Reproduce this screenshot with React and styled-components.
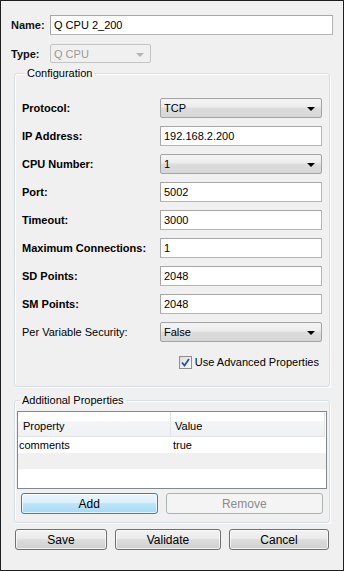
import { Fragment } from 'react'
import styled, { createGlobalStyle } from 'styled-components'

const Global = createGlobalStyle`
  html, body { margin: 0; padding: 0; background: #f0f0f0; }
  body { font-family: 'Liberation Sans', Arial, sans-serif; font-size: 11px; color: #000; }
  * { box-sizing: border-box; }
`

const Window = styled.div`
  width: 344px;
  height: 571px;
  border: 1px solid #1e1e1e;
  background: #f0f0f0;
  padding: 14px 10px 0 10px;
  display: flex;
  flex-direction: column;
`

const TopRow = styled.div`
  display: flex;
  align-items: center;
  height: ${(p) => p.h || 20}px;
  margin-bottom: ${(p) => p.mb || 0}px;
`

const TopLabel = styled.div`
  width: 39px;
  font-weight: 700;
  color: #111;
`

const Input = styled.div`
  height: 20px;
  width: ${(p) => p.w || 162}px;
  background: #fff;
  border: 1px solid;
  border-color: #a7a7a7 #b5b5b5 #b5b5b5 #a7a7a7;
  padding: 0 3px;
  display: flex;
  align-items: center;
  white-space: nowrap;
`

const Select = styled.div`
  height: ${(p) => p.h || 20}px;
  width: ${(p) => p.w || 162}px;
  border: 1px solid ${(p) => (p.disabled ? '#c4c4c4' : '#a3a3a3')};
  border-radius: 2px;
  background: ${(p) =>
    p.disabled
      ? '#f0f0f0'
      : 'linear-gradient(#f5f5f5 0%, #ececec 45%, #dddddd 50%, #d6d6d6 100%)'};
  color: ${(p) => (p.disabled ? '#9a9a9a' : '#000')};
  padding: 0 3px;
  display: flex;
  align-items: center;
  justify-content: space-between;
`

const Arrow = styled.span`
  width: 0;
  height: 0;
  border-left: 4px solid transparent;
  border-right: 4px solid transparent;
  border-top: 4px solid ${(p) => (p.disabled ? '#b5b5b5' : '#000')};
  margin-right: 3px;
  margin-top: 2px;
`

const Group = styled.fieldset`
  margin: ${(p) => p.mt || 0}px 3px 0 3px;
  border: 1px solid #d5dfe5;
  border-radius: 3px;
  box-shadow: inset 1px 1px 0 #fff, 1px 1px 0 #fff;
  padding: ${(p) => p.pad};
  min-width: 0;
`

const Legend = styled.legend`
  padding: 0 2px;
  margin-left: 3px;
  line-height: 13px;
  font-size: 11px;
`

const Grid = styled.div`
  display: grid;
  grid-template-columns: 138px 162px;
  row-gap: 8px;
  align-items: center;
`

const Label = styled.div`
  font-weight: ${(p) => (p.normal ? 400 : 700)};
`

const CheckRow = styled.div`
  display: flex;
  justify-content: flex-end;
  align-items: center;
  margin-top: 12px;
  padding-right: 4px;
  gap: 3px;
  height: 16px;
`

const Box = styled.span`
  width: 13px;
  height: 13px;
  border: 1px solid #8e8f8f;
  background: linear-gradient(135deg, #dcdcdc, #fdfdfd);
  display: flex;
  align-items: center;
  justify-content: center;
`

const Table = styled.div`
  height: 78px;
  border: 1px solid #828790;
  background: #fff;
`

const HeaderRow = styled.div`
  display: flex;
  height: 25px;
  background: linear-gradient(#ffffff 0%, #ffffff 38%, #f4f5f7 40%, #f0f1f3 100%);
  border-bottom: 1px solid #e3e4e6;
  margin-right: 1px;
  border-right: 1px solid #e3e4e6;
`

const HeadCell = styled.div`
  width: ${(p) => p.w}px;
  padding: 8px 0 0 ${(p) => p.pl}px;
  border-right: ${(p) => (p.last ? 'none' : '1px solid #e3e4e6')};
`

const Row = styled.div`
  display: flex;
  height: 16px;
  align-items: center;
  background: ${(p) => (p.alt ? '#f0f0f0' : '#fff')};
`

const Cell = styled.div`
  width: ${(p) => p.w}px;
  padding-left: ${(p) => p.pl}px;
`

const ButtonRow = styled.div`
  display: flex;
  gap: 8px;
  padding: ${(p) => p.pad || 0};
`

const Button = styled.div`
  height: 21px;
  width: ${(p) => p.w}px;
  border-radius: 3px;
  display: flex;
  align-items: center;
  justify-content: center;
  font-size: 12px;
  border: 1px solid
    ${(p) => (p.active ? '#3c7fb1' : p.disabled ? '#adb2b5' : '#707070')};
  color: ${(p) => (p.disabled ? '#8b8b8b' : '#000')};
  background: ${(p) =>
    p.active
      ? 'linear-gradient(#eaf6fd 0%, #d9f0fc 45%, #bee6fd 50%, #a7d9f5 100%)'
      : p.disabled
      ? '#f4f4f4'
      : 'linear-gradient(#f2f2f2 0%, #ebebeb 45%, #dddddd 50%, #cfcfcf 100%)'};
  box-shadow: inset 0 0 0 1px ${(p) => (p.disabled ? 'transparent' : 'rgba(255,255,255,0.7)')};
`

const fields = [
  { label: 'Protocol:', kind: 'select', value: 'TCP' },
  { label: 'IP Address:', kind: 'input', value: '192.168.2.200' },
  { label: 'CPU Number:', kind: 'select', value: '1' },
  { label: 'Port:', kind: 'input', value: '5002' },
  { label: 'Timeout:', kind: 'input', value: '3000' },
  { label: 'Maximum Connections:', kind: 'input', value: '1' },
  { label: 'SD Points:', kind: 'input', value: '2048' },
  { label: 'SM Points:', kind: 'input', value: '2048' },
  { label: 'Per Variable Security:', kind: 'select', value: 'False', normal: true },
]

export default function App() {
  return (
    <>
      <Global />
      <Window>
        <TopRow mb={9}>
          <TopLabel>Name:</TopLabel>
          <Input w={283}>Q CPU 2_200</Input>
        </TopRow>
        <TopRow h={19} mb={4}>
          <TopLabel>Type:</TopLabel>
          <Select w={101} h={19} disabled>
            Q CPU
            <Arrow disabled />
          </Select>
        </TopRow>

        <Group pad="18px 6px 16px 7px">
          <Legend>Configuration</Legend>
          <Grid>
            {fields.map((f) => (
              <Fragment key={f.label}>
                <Label normal={f.normal}>{f.label}</Label>
                {f.kind === 'select' ? (
                  <Select>
                    {f.value}
                    <Arrow />
                  </Select>
                ) : (
                  <Input>{f.value}</Input>
                )}
              </Fragment>
            ))}
          </Grid>
          <CheckRow>
            <Box>
              <svg width="9" height="9" viewBox="0 0 9 9">
                <path d="M1 4.5 L3.5 7.5 L8 1" fill="none" stroke="#2b4fa0" strokeWidth="1.8" />
              </svg>
            </Box>
            <span>Use Advanced Properties</span>
          </CheckRow>
        </Group>

        <Group mt={7} pad="4px 2px 8px 2px">
          <Legend>Additional Properties</Legend>
          <Table>
            <HeaderRow>
              <HeadCell w={153} pl={5}>Property</HeadCell>
              <HeadCell w={153} pl={4} last>Value</HeadCell>
            </HeaderRow>
            <Row>
              <Cell w={154} pl={1}>comments</Cell>
              <Cell w={150} pl={1}>true</Cell>
            </Row>
            <Row alt />
            <Row />
          </Table>
          <ButtonRow pad="4px 4px 0 4px">
            <Button w={137} active>Add</Button>
            <Button w={158} disabled>Remove</Button>
          </ButtonRow>
        </Group>

        <ButtonRow pad="6px 4px 0 4px">
          <Button w={92}>Save</Button>
          <Button w={106}>Validate</Button>
          <Button w={100}>Cancel</Button>
        </ButtonRow>
      </Window>
    </>
  )
}
